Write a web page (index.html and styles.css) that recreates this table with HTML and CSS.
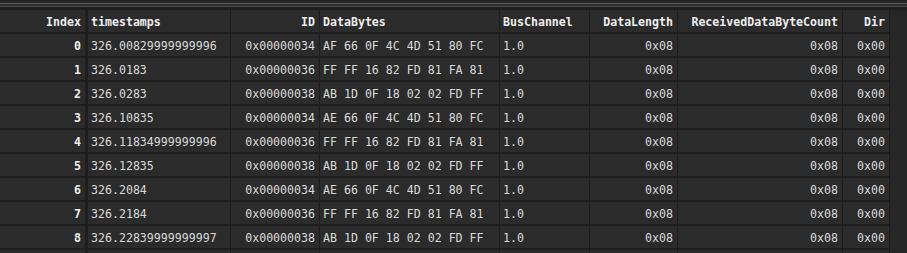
FILE: index.html
```html
<!DOCTYPE html>
<html>
<head>
<meta charset="utf-8">
<link rel="stylesheet" href="styles.css">
</head>
<body>
<div class="topbar"></div>
<div class="view">
  <div class="table">
    <div class="row head">
      <div class="c r idx">Index</div><div class="c">timestamps</div><div class="c r">ID</div><div class="c">DataBytes</div><div class="c">BusChannel</div><div class="c r">DataLength</div><div class="c r">ReceivedDataByteCount</div><div class="c r">Dir</div>
    </div>
    <div class="row">
      <div class="c r idx b">0</div><div class="c">326.00829999999996</div><div class="c r">0x00000034</div><div class="c">AF 66 0F 4C 4D 51 80 FC</div><div class="c">1.0</div><div class="c r">0x08</div><div class="c r">0x08</div><div class="c r">0x00</div>
    </div>
    <div class="row">
      <div class="c r idx b">1</div><div class="c">326.0183</div><div class="c r">0x00000036</div><div class="c">FF FF 16 82 FD 81 FA 81</div><div class="c">1.0</div><div class="c r">0x08</div><div class="c r">0x08</div><div class="c r">0x00</div>
    </div>
    <div class="row">
      <div class="c r idx b">2</div><div class="c">326.0283</div><div class="c r">0x00000038</div><div class="c">AB 1D 0F 18 02 02 FD FF</div><div class="c">1.0</div><div class="c r">0x08</div><div class="c r">0x08</div><div class="c r">0x00</div>
    </div>
    <div class="row">
      <div class="c r idx b">3</div><div class="c">326.10835</div><div class="c r">0x00000034</div><div class="c">AE 66 0F 4C 4D 51 80 FC</div><div class="c">1.0</div><div class="c r">0x08</div><div class="c r">0x08</div><div class="c r">0x00</div>
    </div>
    <div class="row">
      <div class="c r idx b">4</div><div class="c">326.11834999999996</div><div class="c r">0x00000036</div><div class="c">FF FF 16 82 FD 81 FA 81</div><div class="c">1.0</div><div class="c r">0x08</div><div class="c r">0x08</div><div class="c r">0x00</div>
    </div>
    <div class="row">
      <div class="c r idx b">5</div><div class="c">326.12835</div><div class="c r">0x00000038</div><div class="c">AB 1D 0F 18 02 02 FD FF</div><div class="c">1.0</div><div class="c r">0x08</div><div class="c r">0x08</div><div class="c r">0x00</div>
    </div>
    <div class="row">
      <div class="c r idx b">6</div><div class="c">326.2084</div><div class="c r">0x00000034</div><div class="c">AE 66 0F 4C 4D 51 80 FC</div><div class="c">1.0</div><div class="c r">0x08</div><div class="c r">0x08</div><div class="c r">0x00</div>
    </div>
    <div class="row">
      <div class="c r idx b">7</div><div class="c">326.2184</div><div class="c r">0x00000036</div><div class="c">FF FF 16 82 FD 81 FA 81</div><div class="c">1.0</div><div class="c r">0x08</div><div class="c r">0x08</div><div class="c r">0x00</div>
    </div>
    <div class="row">
      <div class="c r idx b">8</div><div class="c">326.22839999999997</div><div class="c r">0x00000038</div><div class="c">AB 1D 0F 18 02 02 FD FF</div><div class="c">1.0</div><div class="c r">0x08</div><div class="c r">0x08</div><div class="c r">0x00</div>
    </div>
    <div class="row">
      <div class="c idx"></div><div class="c"></div><div class="c"></div><div class="c"></div><div class="c"></div><div class="c"></div><div class="c"></div><div class="c"></div>
    </div>
  </div>
  <div class="filler"></div>
</div>
</body>
</html>
```
FILE: styles.css
```css
html, body {
  margin: 0;
  padding: 0;
  width: 907px;
  height: 253px;
  overflow: hidden;
  background: #1e1e1e;
}

.topbar {
  height: 10px;
  background: linear-gradient(to bottom,
    #262626 0, #262626 3px,
    #5a5a5a 3px, #5a5a5a 4px,
    #2e2e2e 4px, #2e2e2e 6px,
    #4c4c4c 6px, #4c4c4c 7px,
    #1e1e1e 7px, #1e1e1e 10px);
}

.view {
  display: flex;
  align-items: flex-start;
  height: 243px;
  overflow: hidden;
}

.table {
  display: flex;
  flex-direction: column;
  row-gap: 2px;
  padding-right: 1px;
  background: #1e1e1e;
}

.row {
  display: grid;
  grid-template-columns: 87px 142px 88px 179px 89px 87px 164px 46px;
  column-gap: 1px;
  height: 22px;
}

.c {
  background: #2b2b2b;
  color: #dadada;
  font-family: "DejaVu Sans Mono", "Liberation Mono", monospace;
  font-size: 11.6px;
  line-height: 24px;
  white-space: pre;
  overflow: hidden;
  padding: 0 3px;
}

.head .c {
  line-height: 25px;
}

.r {
  text-align: right;
  padding-right: 4px;
}

.idx {
  border-right: 2px solid #1e1e1e;
}

.head .c,
.b {
  font-weight: bold;
  color: #ededed;
}

.filler {
  flex: 1;
  align-self: stretch;
  background: #262626;
}
```
